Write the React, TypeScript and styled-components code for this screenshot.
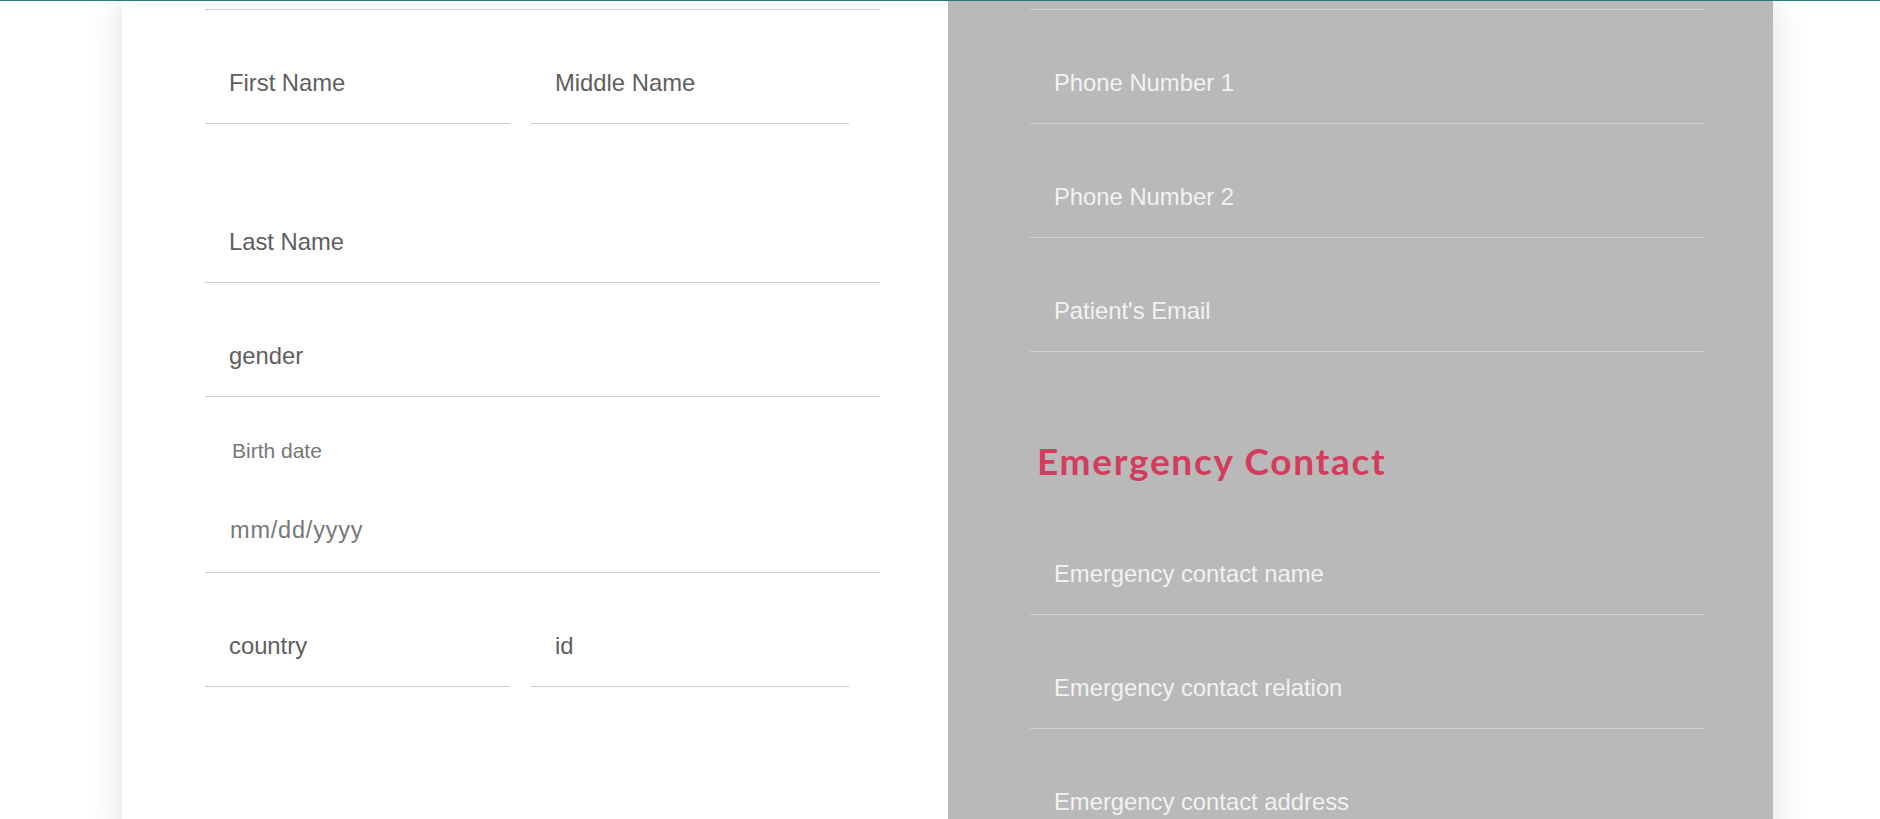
import styled, { createGlobalStyle } from "styled-components"

const GlobalStyle = createGlobalStyle`
  html, body {
    margin: 0;
    padding: 0;
    overflow: hidden;
    background: #ffffff;
  }
  * {
    box-sizing: border-box;
  }
`

const leftFields = {
  names: ["First Name", "Middle Name"],
  last: "Last Name",
  gender: "gender",
  ids: ["country", "id"],
}

const contactFields = ["Phone Number 1", "Phone Number 2", "Patient's Email"]
const emergencyFields = [
  "Emergency contact name",
  "Emergency contact relation",
  "Emergency contact address",
]

export default function App() {
  return <Page>
    <GlobalStyle/>
    <TopBar/>
    <Card>
      <PersonalColumn>
        <Rule/>
        <PairRow>
          {leftFields.names.map(name => <Input key={name} placeholder={name}/>)}
        </PairRow>
        <Input placeholder={leftFields.last} $gap={45}/>
        <Input placeholder={leftFields.gender}/>
        <DateField>
          <DateLabel>Birth date</DateLabel>
          <DateInput placeholder="mm/dd/yyyy"/>
        </DateField>
        <PairRow>
          {leftFields.ids.map(name => <Input key={name} placeholder={name}/>)}
        </PairRow>
      </PersonalColumn>
      <ContactColumn>
        <Rule $light/>
        {contactFields.map(name => <Input key={name} placeholder={name} $light/>)}
        <SectionTitle>Emergency Contact</SectionTitle>
        {emergencyFields.map(name => <Input key={name} placeholder={name} $light/>)}
      </ContactColumn>
    </Card>
  </Page>
}

const Page = styled.div`
  width: 100%;
  height: 819px;
  display: flex;
  flex-direction: column;
  background: #ffffff;
`
const TopBar = styled.div`
  height: 1px;
  width: 100%;
  background: #2f7d7f;
  flex-shrink: 0;
`
const Card = styled.div`
  margin-left: 122px;
  width: 1651px;
  flex: 1;
  display: grid;
  grid-template-columns: 826px 825px;
  box-shadow: 0 0 34px rgba(0, 0, 0, 0.13);
`
const Column = styled.div`
  display: flex;
  flex-direction: column;
  padding: 8px 69px 0 82px;
`
const PersonalColumn = styled(Column)`
  padding-left: 83px;
  padding-right: 68px;
  background: #ffffff;
`
const ContactColumn = styled(Column)`
  background: #b9b9b9;
`
const Rule = styled.div<{ $light?: boolean }>`
  height: 1px;
  background: ${p => p.$light ? '#d2d2d2' : '#cccccc'};
`
const PairRow = styled.div`
  display: grid;
  grid-template-columns: 305px 318px;
  column-gap: 21px;
`
const Input = styled.input<{ $light?: boolean; $gap?: number }>`
  display: block;
  width: 100%;
  margin: ${p => p.$gap ?? 0}px 0 0;
  padding: 59px 0 27px 24px;
  height: 114px;
  border: none;
  border-bottom: 1px solid ${p => p.$light ? '#d2d2d2' : '#cccccc'};
  border-radius: 0;
  outline: none;
  background: transparent;
  font-family: "Liberation Sans", Arial, sans-serif;
  font-size: 23.8px;
  line-height: 27px;
  color: ${p => p.$light ? '#f2f2f2' : '#5c5c5c'};
  &::placeholder {
    color: ${p => p.$light ? '#f2f2f2' : '#5e5e5e'};
    opacity: 1;
  }
`
const DateField = styled.div`
  display: flex;
  flex-direction: column;
  height: 176px;
  padding-top: 42px;
  border-bottom: 1px solid #cccccc;
`
const DateLabel = styled.label`
  padding-left: 27px;
  font-family: "Liberation Sans", Arial, sans-serif;
  font-size: 21px;
  line-height: 24px;
  color: #777777;
`
const DateInput = styled.input`
  display: block;
  width: 100%;
  margin-top: 54px;
  padding: 0 0 0 25px;
  height: 27px;
  border: none;
  outline: none;
  background: transparent;
  font-family: "Liberation Sans", Arial, sans-serif;
  font-size: 23.5px;
  line-height: 27px;
  letter-spacing: 0.8px;
  &::placeholder {
    color: #787878;
    opacity: 1;
  }
`
const SectionTitle = styled.h2`
  margin: 87px 0 18px 7px;
  font-family: Lato, "Noto Sans", sans-serif;
  font-weight: 700;
  font-size: 37px;
  line-height: 1.2;
  letter-spacing: 1.7px;
  color: #d43c5d;
`
